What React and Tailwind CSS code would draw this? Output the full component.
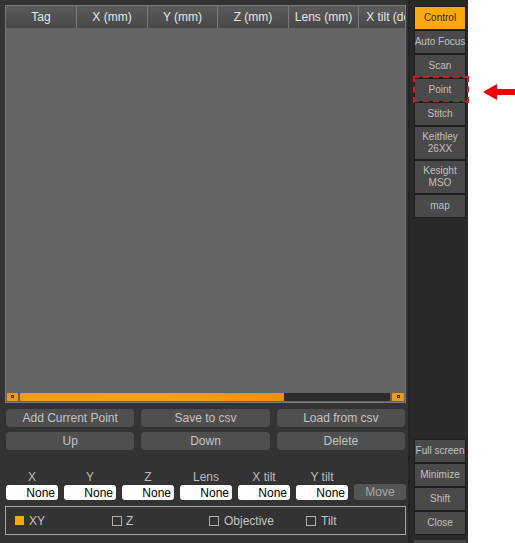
export default function App() {
  const cols = [
    { label: 'Tag', w: 'w-[71px]' },
    { label: 'X (mm)', w: 'w-[71px]' },
    { label: 'Y (mm)', w: 'w-[70px]' },
    { label: 'Z (mm)', w: 'w-[71px]' },
    { label: 'Lens (mm)', w: 'w-[70px]' },
    { label: 'X tilt (deg)', w: 'w-[70px]' },
  ]
  const fields = ['X', 'Y', 'Z', 'Lens', 'X tilt', 'Y tilt']
  const side = [
    ['Control'],
    ['Auto Focus'],
    ['Scan'],
    ['Point'],
    ['Stitch'],
    ['Keithley', '26XX'],
    ['Kesight', 'MSO'],
    ['map'],
  ]
  const btn =
    'flex h-[18px] items-center justify-center rounded-[4px] bg-[#4f4f4f] text-[12px] text-[#c4c4c4]'
  const sbtn =
    'flex flex-col items-center justify-center whitespace-nowrap border border-[#1e1e1e] text-[10px] leading-[12px]'

  return (
    <div
      className="flex h-[543px] w-[515px] overflow-hidden bg-white"
      style={{ fontFamily: '"Liberation Sans", Arial, sans-serif' }}
    >
      <div className="flex w-[408px] flex-col bg-[#333333] pl-[5px] pr-[2px] pt-[5px]">
        <div className="flex h-[398px] flex-col overflow-hidden border border-[#7a7a7a] bg-[#646464]">
          <div className="flex h-[22px] shrink-0 bg-gradient-to-b from-[#5c5c5c] to-[#474747]">
            {cols.map((c) => (
              <div
                key={c.label}
                className={`${c.w} flex shrink-0 items-center justify-center whitespace-nowrap border-r border-[#7a7a7a] text-[12px] text-[#e6e6e6]`}
              >
                {c.label}
              </div>
            ))}
          </div>
          <div className="flex-1" />
          <div className="mb-[1px] flex h-[9px] items-center gap-[2px] px-[1px]">
            <div className="flex h-[8px] w-[11px] items-center justify-center rounded-[1px] bg-[#f2961c]">
              <div className="h-[3px] w-[3px] border border-[#333]" />
            </div>
            <div className="flex h-[8px] flex-1 overflow-hidden rounded-[1px] bg-[#2b2b2b]">
              <div className="h-full w-[264px] bg-gradient-to-r from-[#f39a22] via-[#f6a02a] to-[#ec8f14]" />
            </div>
            <div className="flex h-[8px] w-[12px] items-center justify-center rounded-[1px] bg-[#f2961c]">
              <div className="h-[3px] w-[3px] border border-[#333]" />
            </div>
          </div>
        </div>

        <div className="mt-[6px] grid grid-cols-3 gap-x-[7px] gap-y-[5px] px-[1px]">
          <div className={btn}>Add Current Point</div>
          <div className={btn}>Save to csv</div>
          <div className={btn}>Load from csv</div>
          <div className={btn}>Up</div>
          <div className={btn}>Down</div>
          <div className={btn}>Delete</div>
        </div>

        <div className="mt-[21px] flex items-end gap-[6px] pl-[1px]">
          {fields.map((f) => (
            <div key={f} className="flex w-[52px] flex-col items-center">
              <div className="text-[12px] leading-[12px] text-[#bdbdbd]">{f}</div>
              <div className="mt-[2px] flex h-[15px] w-full items-center justify-end rounded-[3px] bg-white pr-[3px] text-[12px] text-black">
                None
              </div>
            </div>
          ))}
          <div className="flex h-[16px] w-[52px] items-center justify-center rounded-[3px] bg-[#555555] text-[12px] text-[#a8a8a8]">
            Move
          </div>
        </div>

        <div className="mt-[6px] flex h-[29px] items-center border border-[#a5a5a5] pl-[9px] text-[12px] text-[#c4c4c4]">
          <div className="flex w-[97px] items-center gap-[5px]">
            <div className="h-[9px] w-[9px] bg-[#f7a713]" />
            XY
          </div>
          <div className="flex w-[97px] items-center gap-[4px]">
            <div className="h-[10px] w-[10px] border border-[#b0b0b0]" />
            Z
          </div>
          <div className="flex w-[97px] items-center gap-[5px]">
            <div className="h-[10px] w-[10px] border border-[#b0b0b0]" />
            Objective
          </div>
          <div className="flex items-center gap-[5px]">
            <div className="h-[10px] w-[10px] border border-[#b0b0b0]" />
            Tilt
          </div>
        </div>
      </div>

      <div className="flex w-[60px] flex-col border-l-2 border-[#242424] bg-[#292929] pl-[4px] pr-[2px] pt-[6px]">
        {side.map((s, i) => (
          <div
            key={s[0]}
            className={`${sbtn} relative ${s.length > 1 ? 'h-[34px]' : 'h-[24px]'} ${
              i === 0 ? 'bg-[#f8a90c] text-[#3a2a00]' : 'bg-[#4a4a4a] text-[#c0c0c0]'
            }`}
          >
            {s.map((t) => (
              <span key={t}>{t}</span>
            ))}
            {s[0] === 'Point' && (
              <div className="absolute -left-[2px] -top-[3px] h-[27px] w-[56px] border-2 border-dashed border-[#e0141e]" />
            )}
          </div>
        ))}
        <div className="flex-1" />
        {['Full screen', 'Minimize', 'Shift', 'Close'].map((t) => (
          <div key={t} className={`${sbtn} h-[24px] bg-[#4a4a4a] text-[#c0c0c0]`}>
            {t}
          </div>
        ))}
        <div className="mt-[5px] h-[3px] bg-[#444]" />
      </div>

      <div className="flex-1 pl-[15px] pt-[84px]">
        <svg width="32" height="16" viewBox="0 0 32 16">
          <polygon points="0,8 14,0 14,5 32,5 32,11 14,11 14,16" fill="#f00000" />
        </svg>
      </div>
    </div>
  )
}
